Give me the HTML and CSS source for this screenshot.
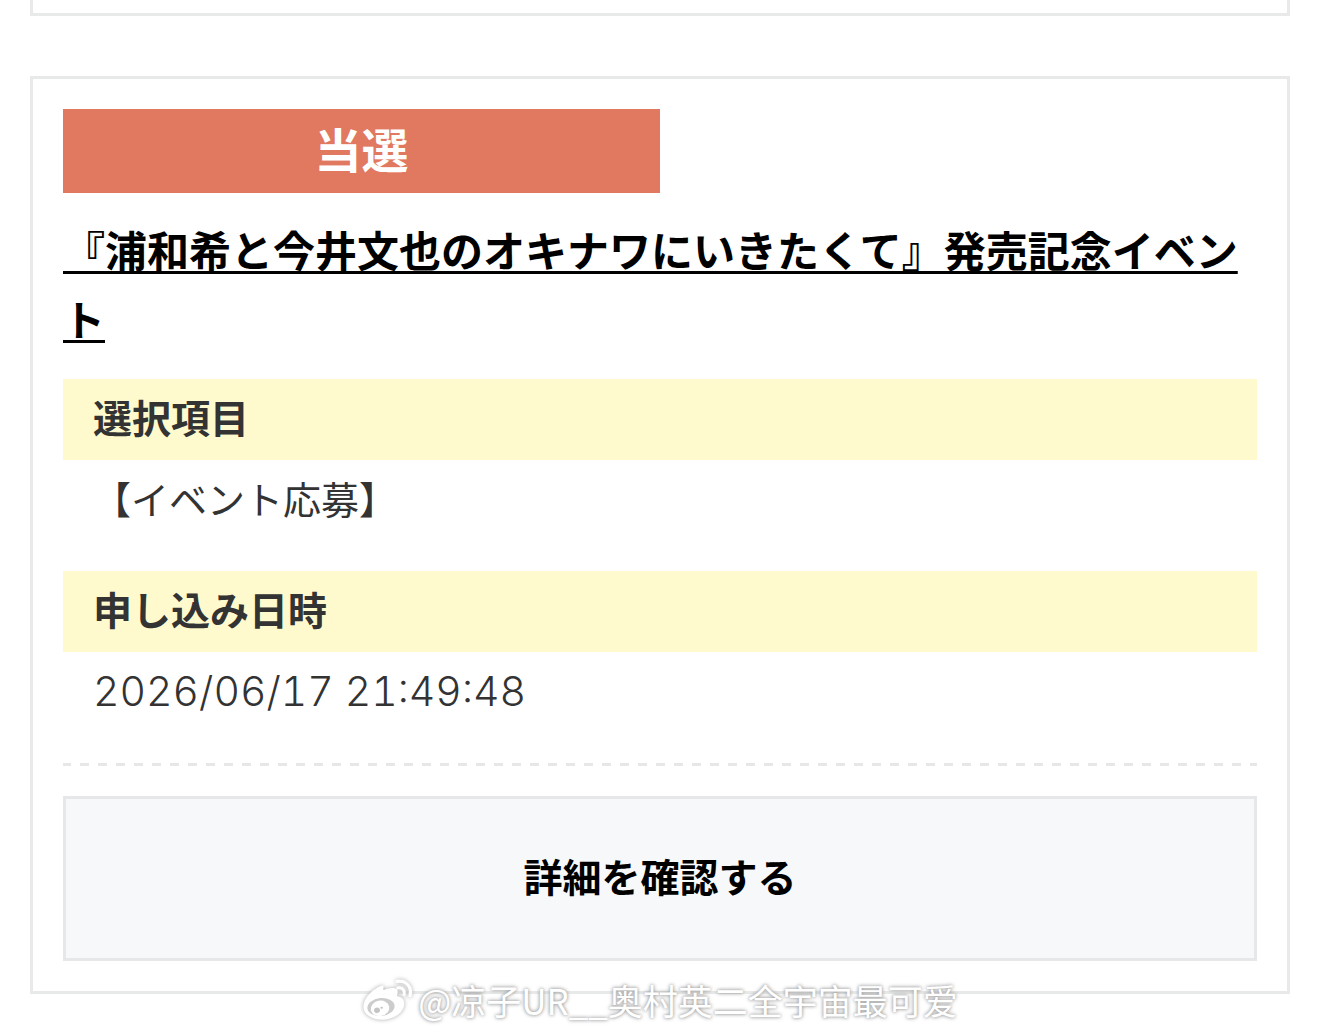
FILE: index.html
```html
<!DOCTYPE html>
<html lang="ja">
<head>
<meta charset="utf-8">
<meta name="viewport" content="width=device-width, initial-scale=1">
<title>申し込み履歴</title>
<link rel="stylesheet" href="styles.css">
</head>
<body>
<main class="page">
  <section class="card card--previous"></section>

  <article class="card">
    <p class="status">当選</p>
    <h2 class="title"><a href="#event">『浦和希と今井文也のオキナワにいきたくて』発売記念イベント</a></h2>
    <dl class="details">
      <dt>選択項目</dt>
      <dd>【イベント応募】</dd>
      <dt>申し込み日時</dt>
      <dd class="date">2026/06/17 21:49:48</dd>
    </dl>
    <hr class="divider">
    <button class="confirm" type="button">詳細を確認する</button>
  </article>

  <div class="watermark" lang="zh-CN">
    <svg class="watermark-logo" viewBox="0 0 156 132" aria-hidden="true">
      <path fill="#fff" d="M54 25C35 33 6 57 4 85c-1 25 27 40 56 40 39 0 66-23 67-47 0-13-8-20-19-23-3-1-3-3-2-6 3-9 1-16-7-18-9-3-21 0-32 4-4 1-4-1-3-4 3-9-1-11-10-6Z"/>
      <ellipse cx="57" cy="87" rx="41" ry="27" fill="#ccc" transform="rotate(-6 57 87)"/>
      <ellipse cx="54" cy="91" rx="28" ry="23" fill="#fff" transform="rotate(-12 54 91)"/>
      <ellipse cx="45" cy="97" rx="9" ry="8" fill="#c4c4c4" transform="rotate(-20 45 97)"/>
      <ellipse cx="59" cy="89" rx="4" ry="3" fill="#c4c4c4"/>
      <path fill="none" stroke="#fff" stroke-width="10" stroke-linecap="round" d="M105 10c27-5 46 18 39 43"/>
      <path fill="none" stroke="#fff" stroke-width="9" stroke-linecap="round" d="M107 30c14-3 23 8 19 20"/>
    </svg>
    <span>@凉子UR__奥村英二全宇宙最可爱</span>
  </div>
</main>
</body>
</html>
```
FILE: styles.css
```css
* {
  box-sizing: border-box;
}

body {
  margin: 0;
  background: #fff;
  color: #333;
  font-family: "Noto Sans CJK JP", sans-serif;
  font-size: 39px;
}

.page {
  position: relative;
  display: flex;
  flex-direction: column;
  gap: 60px;
  padding: 0 30px 41px;
}

.card {
  padding: 30px;
  border: 3px solid #e8eaea;
}

.card--previous {
  padding: 0 0 13px;
  border-top: 0;
}

.status {
  width: 50%;
  margin: 0;
  padding-bottom: 6px;
  background: #e17860;
  color: #fff;
  font-size: 47px;
  font-weight: 700;
  line-height: 78px;
  text-align: center;
}

.title {
  margin: 21px 0 0;
  font-size: 42px;
  font-weight: 700;
  line-height: 69px;
  text-spacing-trim: space-all;
}

.title a {
  color: #000;
  text-decoration: underline 3px;
  text-decoration-skip-ink: none;
  text-underline-offset: 4px;
}

.details {
  margin: 27px 0 0;
  text-spacing-trim: space-all;
}

.details dt {
  padding: 0 30px 6px;
  background: #fffacd;
  font-weight: 700;
  line-height: 75px;
}

.details dd {
  margin: 0;
  padding: 0 30px 36px;
  font-size: 38px;
  font-weight: 400;
  line-height: 75px;
}

.details .date {
  padding-bottom: 32px;
  font-family: Inter, "Noto Sans CJK JP", sans-serif;
  font-size: 41px;
  font-variant-numeric: tabular-nums;
  font-weight: 300;
  line-height: 79px;
}

.divider {
  height: 3px;
  margin: 0 0 30px;
  border: 0;
  background: repeating-linear-gradient(90deg, #e6e7e7 0 8px, transparent 8px 17px, #e6e7e7 17px 18px);
}

.confirm {
  display: block;
  width: 100%;
  padding: 48px 30px 54px;
  border: 3px solid #e6e7e9;
  border-radius: 0;
  background: #f7f8fa;
  color: #000;
  font: inherit;
  font-weight: 700;
  line-height: 57px;
}

.watermark {
  position: absolute;
  right: 0;
  bottom: 10px;
  left: 0;
  display: flex;
  align-items: center;
  justify-content: center;
  gap: 4px;
  color: #fff;
  font-family: "Noto Sans CJK SC", sans-serif;
  font-size: 35px;
  font-weight: 400;
  line-height: 50px;
  text-shadow: 0 0 4px #999, 0 0 3px #bbb;
  white-space: nowrap;
}

.watermark-logo {
  width: 52px;
  height: 44px;
  overflow: visible;
  filter: drop-shadow(0 0 2px #aaa);
}
```
